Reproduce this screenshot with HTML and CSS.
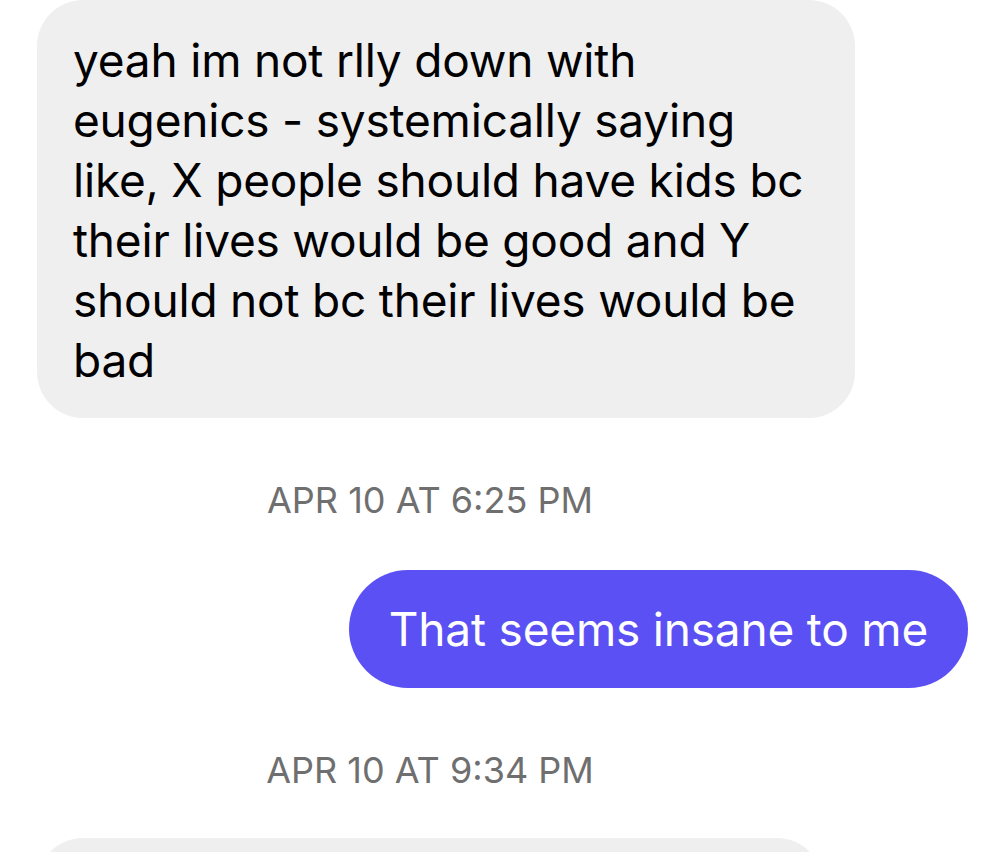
FILE: index.html
```html
<!DOCTYPE html>
<html lang="en">
<head>
    <meta charset="UTF-8">
    <meta name="viewport" content="width=device-width, initial-scale=1.0">
    <title>Messages</title>
    <link rel="stylesheet" href="styles.css">
</head>
<body>

    <div class="thread">
        <div class="row received">
            <div class="bubble grey">
                yeah im not rlly down with eugenics - systemically saying like, X people should have kids bc their lives would be good and Y should not bc their lives would be bad
            </div>
        </div>

        <div class="stamp">APR 10 AT 6:25 PM</div>

        <div class="row sent">
            <div class="bubble blue">That seems insane to me</div>
        </div>

        <div class="stamp">APR 10 AT 9:34 PM</div>

        <div class="row received">
            <div class="bubble grey next"></div>
        </div>
    </div>

</body>
</html>
```

FILE: styles.css
```css
body {
    margin: 0;
    background: #fff;
    font-family: Inter, "Noto Sans", sans-serif;
}
.thread {
    display: flex;
    flex-direction: column;
    width: 993px;
    height: 852px;
    overflow: hidden;
}
.row {
    display: flex;
    flex-shrink: 0;
}
.received {
    justify-content: flex-start;
    padding-left: 37px;
}
.sent {
    justify-content: flex-end;
    padding-right: 25px;
}
.bubble {
    font-size: 46px;
    line-height: 60px;
    letter-spacing: -0.2px;
    box-sizing: border-box;
}
.grey {
    width: 818px;
    background: #efefef;
    color: #000;
    border-radius: 46px;
    padding: 30px 30px 28px 36px;
}
.blue {
    background: #5a50f4;
    color: #fff;
    border-radius: 59px;
    padding: 29px 40px;
    height: 118px;
}
.next {
    width: 786px;
    height: 120px;
    padding: 0;
}
.stamp {
    flex-shrink: 0;
    width: 860px;
    text-align: center;
    font-size: 36px;
    color: #6f6f6f;
    line-height: 40px;
}
.thread > .stamp:nth-child(2) {
    margin: 62px 0 50px;
}
.thread > .stamp:nth-child(4) {
    margin: 62px 0 48px;
}
```
